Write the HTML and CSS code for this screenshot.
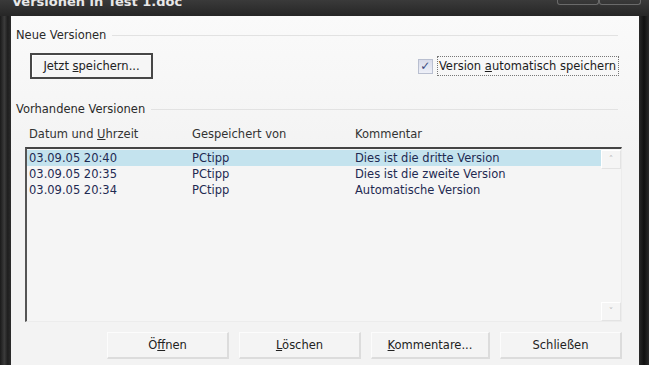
FILE: index.html
```html
<!DOCTYPE html>
<html lang="de">
<head>
  <meta charset="UTF-8">
  <title>Versionen in Test 1.doc</title>
  <link rel="stylesheet" href="styles.css">
</head>
<body>
  <div class="window">
    <div class="titlebar">
      <span class="title">Versionen in Test 1.doc</span>
      <div class="caption-buttons"><span></span><span></span></div>
    </div>
    <div class="frame">
      <div class="side left"></div>
      <div class="client">
        <div class="group-label"><span>Neue Versionen</span><i></i></div>
        <div class="new-row">
          <button class="btn-main">Jetzt <u>s</u>peichern...</button>
          <label class="auto">
            <span class="check">&#10003;</span>
            <span class="auto-text">Version <u>a</u>utomatisch speichern</span>
          </label>
        </div>
        <div class="group-label second"><span>Vorhandene Versionen</span><i></i></div>
        <div class="cols head">
          <span>Datum und <u>U</u>hrzeit</span>
          <span>Gespeichert von</span>
          <span>Kommentar</span>
        </div>
        <div class="listbox">
          <div class="rows">
            <div class="cols row selected">
              <span>03.09.05 20:40</span><span>PCtipp</span><span>Dies ist die dritte Version</span>
            </div>
            <div class="cols row">
              <span>03.09.05 20:35</span><span>PCtipp</span><span>Dies ist die zweite Version</span>
            </div>
            <div class="cols row">
              <span>03.09.05 20:34</span><span>PCtipp</span><span>Automatische Version</span>
            </div>
          </div>
          <div class="scroll">
            <span class="arrow">&#708;</span>
            <span class="arrow">&#709;</span>
          </div>
        </div>
        <div class="buttons">
          <button class="btn">Ö<u>f</u>fnen</button>
          <button class="btn"><u>L</u>öschen</button>
          <button class="btn narrow"><u>K</u>ommentare...</button>
          <button class="btn">Schließen</button>
        </div>
      </div>
      <div class="side right"></div>
    </div>
  </div>
</body>
</html>
```

FILE: styles.css
```css
body {
  margin: 0;
  background-color: #1c1c1c;
  font-family: "DejaVu Sans", Tahoma, sans-serif;
}
.window {
  width: 649px;
  height: 365px;
  display: flex;
  flex-direction: column;
  overflow: hidden;
}
.titlebar {
  height: 16px;
  flex: none;
  display: flex;
  justify-content: space-between;
  background: linear-gradient(#3a3a3a, #262626);
  overflow: hidden;
}
.title {
  margin: -6px 0 0 12px;
  color: #e8e8e8;
  font-weight: bold;
  font-size: 13px;
  line-height: 16px;
}
.caption-buttons {
  display: flex;
  margin-right: 8px;
}
.caption-buttons span {
  width: 40px;
  height: 4px;
  border: 1px solid #6a6a6a;
  border-top: none;
  border-radius: 0 0 3px 3px;
}
.frame {
  flex: 1;
  display: flex;
}
.side.left {
  width: 11px;
  background: linear-gradient(90deg, #1a1a1a, #3b3b3b 40%, #1e1e1e 70%, #2c2c2c);
}
.side.right {
  width: 10px;
  background: linear-gradient(90deg, #2a2a2a, #111 50%, #2a2a2a);
}
.client {
  flex: 1;
  background: linear-gradient(#fafafa, #f3f3f3 40%);
  padding: 11px 17px 0 5px;
  font-size: 11.5px;
  color: #2a2a2a;
}
.group-label {
  display: flex;
  align-items: center;
  height: 16px;
}
.group-label i {
  flex: 1;
  height: 1px;
  margin: 0 4px 0 6px;
  background-color: #e2e2e2;
}
.group-label.second {
  margin-top: 22px;
}
.new-row {
  display: flex;
  justify-content: space-between;
  align-items: center;
  margin: 10px 3px 0 14px;
  height: 26px;
}
button {
  font-family: inherit;
  font-size: 11.5px;
  color: #222;
  padding: 0;
}
.btn-main {
  width: 123px;
  height: 26px;
  background-color: #f6f6f6;
  border: 2px solid #474747;
  box-shadow: inset 1px 1px #fff;
}
.auto {
  display: flex;
  align-items: center;
  gap: 4px;
}
.check {
  width: 13px;
  height: 13px;
  border: 1px solid #b9bfd0;
  background: linear-gradient(#d8dbea, #eef0f8);
  color: #3a4a80;
  font-size: 12px;
  line-height: 13px;
  text-align: center;
}
.auto-text {
  border: 1px dotted #777;
  padding: 2px 2px 2px 1px;
  color: #1c1c1c;
}
.cols {
  display: grid;
  grid-template-columns: 163px 163px 1fr;
  align-items: center;
}
.head {
  margin: 9px 0 0 13px;
  height: 16px;
  color: #333;
}
.listbox {
  margin: 5px 0 0 9px;
  height: 172px;
  display: flex;
  border-left: 2px solid #555;
  border-top: 2px solid #444;
  border-right: 1px solid #ececec;
  border-bottom: 1px solid #ececec;
  background-color: #f5f5f5;
}
.rows {
  flex: 1;
  padding-top: 1px;
}
.row {
  height: 16px;
  padding-left: 2px;
  color: #1f2a52;
}
.row.selected {
  background-color: #c4e3ee;
}
.scroll {
  width: 20px;
  display: flex;
  flex-direction: column;
  justify-content: space-between;
  padding-top: 1px;
}
.arrow {
  height: 17px;
  border: 1px solid #e3e3e3;
  border-left-color: #fff;
  border-top-color: #fff;
  color: #bbb;
  font-size: 9px;
  line-height: 17px;
  text-align: center;
}
.buttons {
  display: flex;
  justify-content: flex-end;
  gap: 10px;
  margin-top: 10px;
}
.btn {
  width: 122px;
  height: 27px;
  background-color: #f4f4f4;
  border: 1px solid #fcfcfc;
  border-right: 2px solid #dcdcdc;
  border-bottom: 2px solid #dcdcdc;
}
.btn.narrow {
  width: 119px;
}
```
